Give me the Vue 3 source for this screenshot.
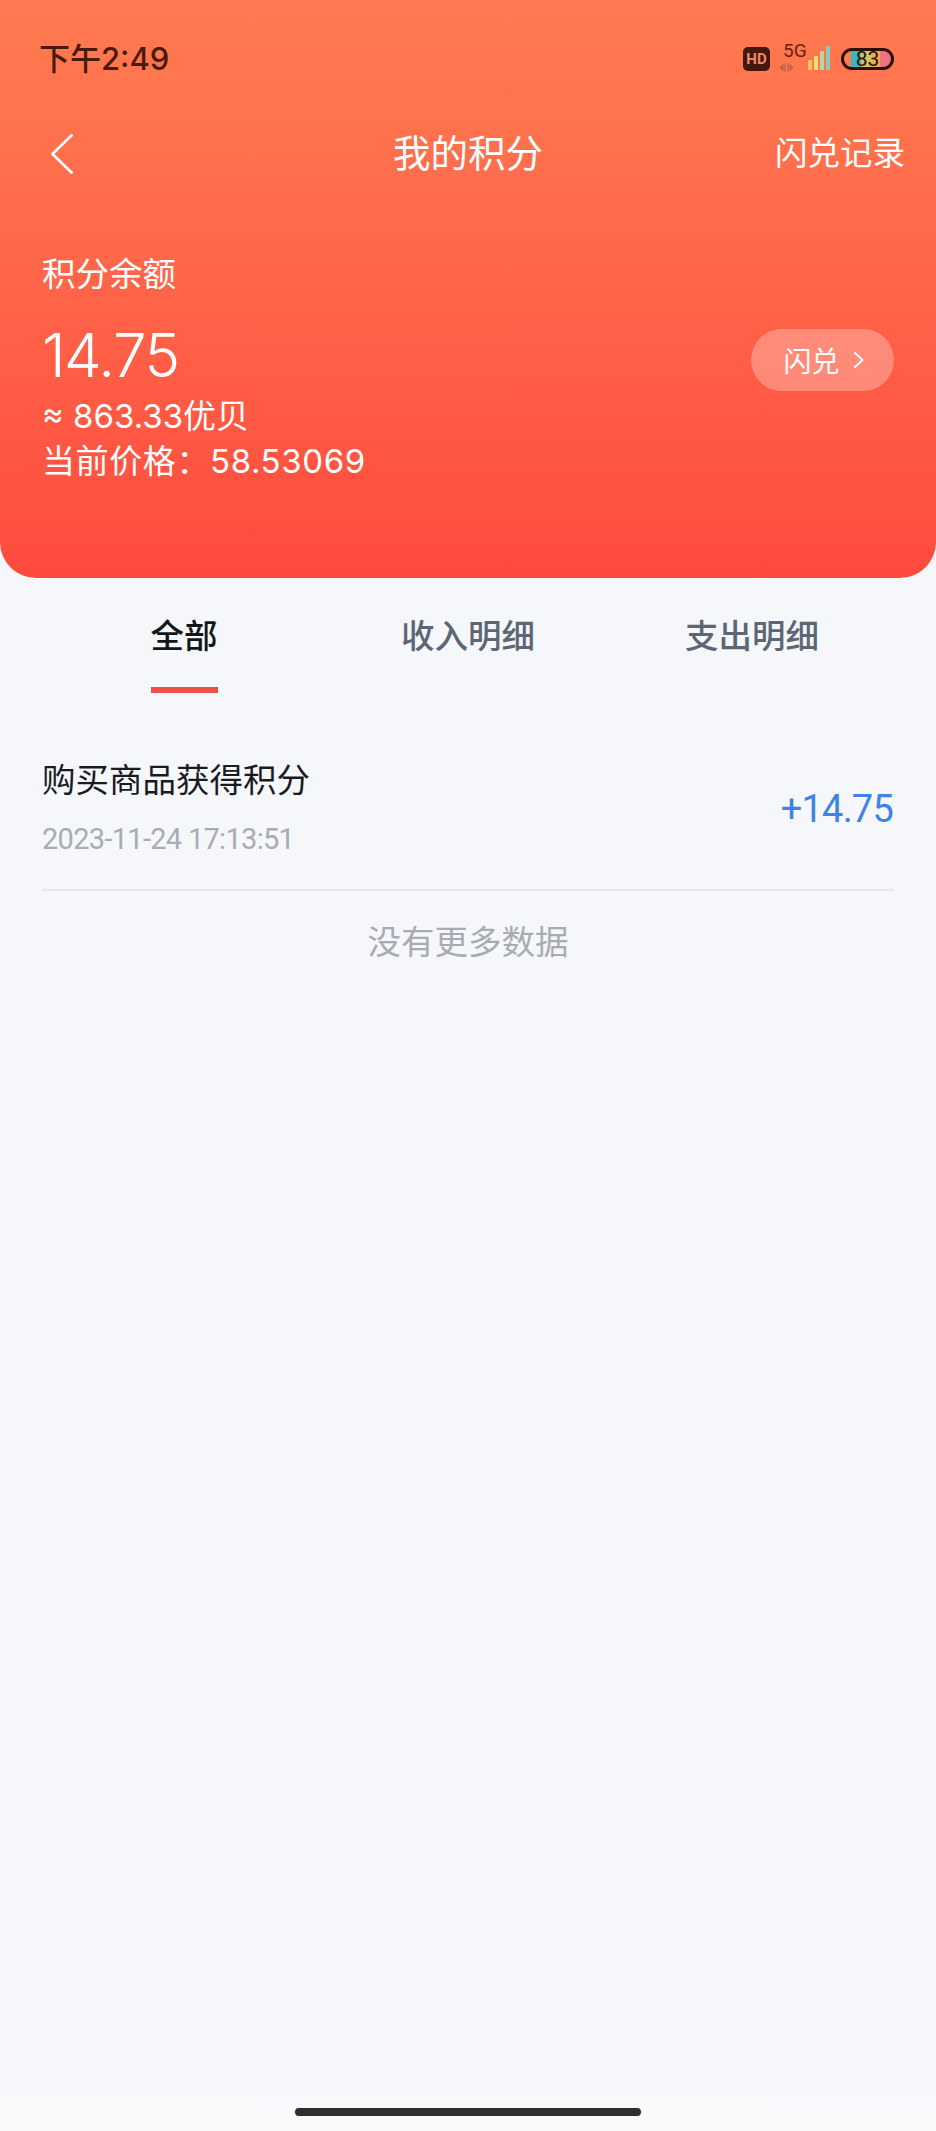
<script setup>
const tabs = [
  { name: '全部', active: true },
  { name: '收入明细', active: false },
  { name: '支出明细', active: false },
]
const bars = [10, 14, 19, 24]
</script>

<template>
  <div class="page">
    <header class="hero">
      <div class="status">
        <span class="time">下午2:49</span>
        <div class="status-icons">
          <span class="hd">HD</span>
          <div class="net">
            <span class="net-label">5G</span>
            <svg class="net-arrows" width="15" height="9" viewBox="0 0 15 9">
              <path d="M0.500 4.500L4.500 0.500V8.500Z" fill="#b9614a" />
              <path d="M6 0.500V8.500" stroke="#b9614a" stroke-width="1.200" />
              <path d="M9 0.500V8.500" stroke="#b9614a" stroke-width="1.200" />
              <path d="M14.500 4.500L10.500 0.500V8.500Z" fill="#b9614a" />
            </svg>
          </div>
          <div class="signal">
            <i v-for="(h, i) in bars" :key="i" :class="'bar-' + i" :style="{ height: h + 'px' }"></i>
          </div>
          <div class="battery"><span>83</span></div>
        </div>
      </div>

      <div class="nav">
        <svg class="back" width="24" height="42" viewBox="0 0 24 42">
          <path d="M21.700 2.300L2.500 21L21.700 39.700" fill="none" stroke="#fff" stroke-width="2.600" stroke-linecap="round" stroke-linejoin="round" />
        </svg>
        <h1 class="nav-title">我的积分</h1>
        <span class="nav-link">闪兑记录</span>
      </div>

      <div class="balance">
        <div class="balance-left">
          <div class="balance-label">积分余额</div>
          <div class="balance-value">14.75</div>
          <div class="balance-sub first">≈ 863.33优贝</div>
          <div class="balance-sub price">当前价格：58.53069</div>
        </div>
        <div class="swap">
          <span>闪兑</span>
          <svg width="12" height="18" viewBox="0 0 12 18">
            <path d="M2 2L9.500 9L2 16" fill="none" stroke="#fff" stroke-width="2" stroke-linecap="round" stroke-linejoin="round" />
          </svg>
        </div>
      </div>
    </header>

    <nav class="tabs">
      <div v-for="tab in tabs" :key="tab.name" class="tab" :class="{ active: tab.active }">
        <span>{{ tab.name }}</span>
      </div>
    </nav>

    <section class="list">
      <div class="row">
        <div>
          <div class="row-title">购买商品获得积分</div>
          <div class="row-date">2023-11-24 17:13:51</div>
        </div>
        <div class="row-amount">+14.75</div>
      </div>
      <p class="no-more">没有更多数据</p>
    </section>

    <footer class="home-area">
      <div class="home-bar"></div>
    </footer>
  </div>
</template>

<style>
html, body {
  margin: 0;
  background: #f5f7fb;
}
</style>

<style scoped>
.page {
  width: 936px;
  height: 2131px;
  overflow: hidden;
  display: flex;
  flex-direction: column;
  background: #f5f7fb;
  font-family: Roboto, "Noto Sans CJK SC", sans-serif;
}

.hero {
  height: 578px;
  box-sizing: border-box;
  padding: 0 28px 0 42px;
  color: #fff;
  background: linear-gradient(180deg, #ff7b50 0%, #ff6a4b 40%, #ff4a3d 100%);
  border-radius: 0 0 36px 36px;
}

.status {
  height: 117px;
  display: flex;
  align-items: flex-start;
  justify-content: space-between;
  margin-left: -3px;
  padding-right: 14px;
}

.time {
  margin-top: 38px;
  font-family: Inter, "Noto Sans CJK SC", sans-serif;
  font-size: 31px;
  line-height: 42px;
  font-weight: 500;
  color: #4a1a0c;
}

.status-icons {
  display: flex;
  align-items: flex-start;
  margin-top: 43px;
}

.hd {
  width: 27px;
  height: 24px;
  margin-top: 4px;
  border-radius: 5px;
  background: #43190f;
  color: #f08a68;
  font-size: 15px;
  font-weight: 700;
  line-height: 24px;
  text-align: center;
}

.net {
  width: 27px;
  margin-left: 13px;
}

.net-label {
  display: block;
  font-size: 19px;
  line-height: 16px;
  color: #6b200f;
}

.net-arrows {
  display: block;
  margin-top: 4px;
  margin-left: -4px;
}

.signal {
  display: flex;
  align-items: flex-end;
  gap: 2px;
  height: 24px;
  margin-top: 3px;
  margin-left: -2px;
}

.signal i {
  width: 4px;
  border-radius: 1px 1px 0 0;
}

.bar-0 { background: #f3c75f; }
.bar-1 { background: #f1dd77; }
.bar-2 { background: #b5d99a; }
.bar-3 { background: #86cdbd; }

.battery {
  width: 53px;
  height: 22px;
  box-sizing: border-box;
  margin-top: 5px;
  margin-left: 11px;
  border: 3px solid #2a100a;
  border-radius: 11px;
  background: linear-gradient(90deg, #ff7b50 0 14%, #3fb4c4 14% 36%, #cfc467 36% 60%, #f1a94f 60% 76%, #ec7480 76% 100%);
  text-align: center;
}

.battery span {
  display: block;
  font-size: 21px;
  line-height: 16px;
  color: #2a100a;
}

.nav {
  height: 74px;
  display: grid;
  grid-template-columns: 1fr auto 1fr;
  align-items: center;
  margin-left: -42px;
  margin-right: -28px;
  padding: 0 31px;
}

.back {
  display: block;
  margin-left: 19px;
  margin-top: -1px;
}

.nav-title {
  margin: 0;
  font-size: 37.500px;
  font-weight: 400;
  line-height: 50px;
}

.nav-link {
  justify-self: end;
  font-size: 32.500px;
  line-height: 44px;
}

.balance {
  display: flex;
  justify-content: space-between;
  align-items: flex-start;
  margin-top: 62px;
}

.balance-left {
  min-width: 0;
}

.balance-label {
  font-size: 33.500px;
  line-height: 44px;
}

.balance-value {
  margin-top: 25px;
  font-family: Inter, "Noto Sans CJK SC", sans-serif;
  font-size: 60px;
  font-weight: 300;
  line-height: 66px;
  letter-spacing: -1.500px;
}

.balance-sub {
  font-family: Inter, "Noto Sans CJK SC", sans-serif;
  font-size: 33px;
  line-height: 45px;
}

.balance-sub.first {
  margin-top: 6px;
}

.balance-sub.price {
  letter-spacing: 0.600px;
}

.swap {
  width: 143px;
  height: 62px;
  box-sizing: border-box;
  padding-left: 3px;
  margin-top: 76px;
  margin-right: 14px;
  border-radius: 31px;
  background: rgba(255, 255, 255, 0.28);
  display: flex;
  align-items: center;
  justify-content: center;
  gap: 13px;
  font-size: 28px;
}

.tabs {
  display: flex;
  padding: 0 42px;
  height: 116px;
}

.tab {
  flex: 1;
  display: flex;
  justify-content: center;
}

.tab span {
  height: 115px;
  box-sizing: border-box;
  padding-top: 37px;
  font-size: 33.500px;
  line-height: 44px;
  font-weight: 500;
  color: #5c6675;
}

.tab.active span {
  color: #14161a;
  border-bottom: 6px solid #f0504a;
}

.list {
  padding: 0 42px;
}

.row {
  display: flex;
  align-items: center;
  justify-content: space-between;
  height: 197px;
  box-sizing: border-box;
  padding-top: 34px;
  border-bottom: 2px solid #e4e6eb;
}

.row-title {
  font-size: 33.500px;
  line-height: 44px;
  color: #1a1b1f;
}

.row-date {
  margin-top: 16px;
  font-size: 29px;
  line-height: 40px;
  letter-spacing: -0.700px;
  color: #a9adb3;
}

.row-amount {
  margin-right: 1px;
  font-size: 38px;
  line-height: 50px;
  letter-spacing: -0.800px;
  color: #3f84e5;
}

.no-more {
  margin: 30px 0 0;
  text-align: center;
  font-size: 33.500px;
  line-height: 44px;
  color: #a8acb2;
}

.home-area {
  margin-top: auto;
  height: 41px;
  box-sizing: border-box;
  padding-top: 18px;
  display: flex;
  justify-content: center;
  background: linear-gradient(180deg, #f5f7fb 0%, #fafafc 30%);
}

.home-bar {
  width: 346px;
  height: 8px;
  border-radius: 4px;
  background: #2e2e2e;
}
</style>
